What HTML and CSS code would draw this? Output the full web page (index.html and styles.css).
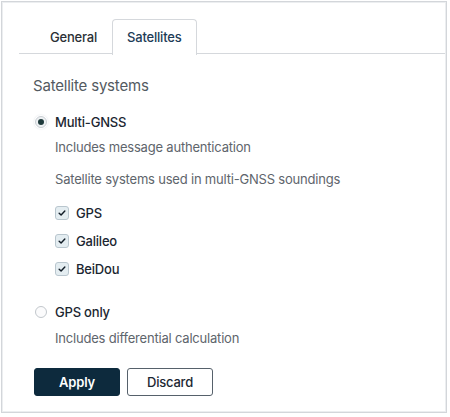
FILE: index.html
```html
<!DOCTYPE html>
<html lang="en">
<head>
<meta charset="utf-8">
<title>Satellites</title>
<link rel="stylesheet" href="styles.css">
</head>
<body>
<div class="frame">
  <div class="tabs">
    <div class="tab">General</div>
    <div class="tab active">Satellites</div>
  </div>
  <div class="panel">
    <div class="heading">Satellite systems</div>
    <label class="option first">
      <span class="radio checked"></span>
      <span class="label">Multi-GNSS</span>
    </label>
    <div class="desc d1">Includes message authentication</div>
    <div class="desc d2">Satellite systems used in multi-GNSS soundings</div>
    <div class="checks">
      <label class="check-row"><span class="checkbox"><svg viewBox="0 0 12 12" width="10" height="10"><path d="M2.6 6.2 L4.9 8.4 L9.4 3.6" fill="none" stroke="#111c26" stroke-width="1.7" stroke-linecap="round" stroke-linejoin="round"/></svg></span><span class="label">GPS</span></label>
      <label class="check-row"><span class="checkbox"><svg viewBox="0 0 12 12" width="10" height="10"><path d="M2.6 6.2 L4.9 8.4 L9.4 3.6" fill="none" stroke="#111c26" stroke-width="1.7" stroke-linecap="round" stroke-linejoin="round"/></svg></span><span class="label">Galileo</span></label>
      <label class="check-row"><span class="checkbox"><svg viewBox="0 0 12 12" width="10" height="10"><path d="M2.6 6.2 L4.9 8.4 L9.4 3.6" fill="none" stroke="#111c26" stroke-width="1.7" stroke-linecap="round" stroke-linejoin="round"/></svg></span><span class="label">BeiDou</span></label>
    </div>
    <label class="option second">
      <span class="radio"></span>
      <span class="label">GPS only</span>
    </label>
    <div class="desc d3">Includes differential calculation</div>
    <div class="actions">
      <button class="btn primary">Apply</button>
      <button class="btn secondary">Discard</button>
    </div>
  </div>
</div>
</body>
</html>
```

FILE: styles.css
```css
* { box-sizing: border-box; }
html, body { margin: 0; padding: 0; background: #ffffff; }
body {
  font-family: Inter, "Noto Sans", sans-serif;
  font-size: 13px;
  letter-spacing: -0.2px;
  color: #1c2733;
  padding: 1px 3px 4px 1px;
}
.frame {
  height: 412px;
  border: 1px solid #d3d6da;
  box-shadow: inset 0 0 0 1px #eceef0;
  display: flex;
  flex-direction: column;
}
.tabs {
  display: flex;
  margin: 17px 1px 0 17px;
  padding-left: 15px;
  border-bottom: 1px solid #d5d8dc;
  height: 35px;
}
.tab {
  height: 35px;
  padding: 0 15px 0 15px;
  display: flex;
  align-items: center;
  font-weight: 500;
  color: #2a2f35;
  border: 1px solid transparent;
  border-bottom: none;
}
.tab:first-child { padding-right: 14px; }
.tab.active {
  color: #1d3c57;
  background: #ffffff;
  border-color: #d5d8dc;
  border-radius: 4px 4px 0 0;
  margin-bottom: -1px;
  height: 36px;
  padding: 0 14px 1px 14px;
}
.panel {
  padding: 22px 0 0 31px;
  display: flex;
  flex-direction: column;
  align-items: flex-start;
}
.heading {
  font-size: 15px;
  line-height: 20px;
  color: #535a61;
}
.option {
  display: flex;
  align-items: center;
  height: 20px;
  line-height: 20px;
}
.option.first { margin-top: 16px; }
.option.second { margin-top: 23px; }
.radio {
  width: 12px;
  height: 12px;
  border-radius: 50%;
  border: 1px solid #c2c7cc;
  background: #fbfbfc;
  margin: 0 8px 0 2px;
  position: relative;
  flex: none;
}
.radio.checked {
  background: #eef1f3;
  border-color: #c9ced3;
  box-shadow: 0 0 0 1px #ffffff, 0 0 2px 1px #dfe3e7;
}
.radio.checked::after {
  content: "";
  position: absolute;
  left: 2px;
  top: 2px;
  width: 6px;
  height: 6px;
  border-radius: 50%;
  background: #1f3b3c;
}
.label {
  font-weight: 500;
  color: #1b2631;
}
.desc {
  line-height: 20px;
  color: #5e656c;
  margin-left: 22px;
}
.desc.d1 { margin-top: 5px; }
.desc.d2 { margin-top: 12px; }
.desc.d3 { margin-top: 6px; }
.checks {
  display: flex;
  flex-direction: column;
  gap: 8px;
  margin: 14px 0 0 22px;
}
.check-row {
  display: flex;
  align-items: center;
  height: 20px;
}
.checkbox {
  width: 14px;
  height: 14px;
  border: 1px solid #b9c6ce;
  background: #e4edf1;
  border-radius: 3px;
  display: flex;
  align-items: center;
  justify-content: center;
  margin-right: 7px;
  flex: none;
}
.actions {
  display: flex;
  gap: 7px;
  margin-top: 20px;
  margin-left: 1px;
}
.btn {
  font-family: Inter, "Noto Sans", sans-serif;
  font-size: 13px;
  letter-spacing: -0.2px;
  font-weight: 600;
  height: 28px;
  width: 86px;
  border-radius: 3px;
  cursor: pointer;
}
.btn.primary {
  background: #0d2a3d;
  color: #ffffff;
  border: 1px solid #0d2a3d;
}
.btn.secondary {
  background: #ffffff;
  color: #1c2733;
  border: 1px solid #56616b;
  font-weight: 500;
}
```
